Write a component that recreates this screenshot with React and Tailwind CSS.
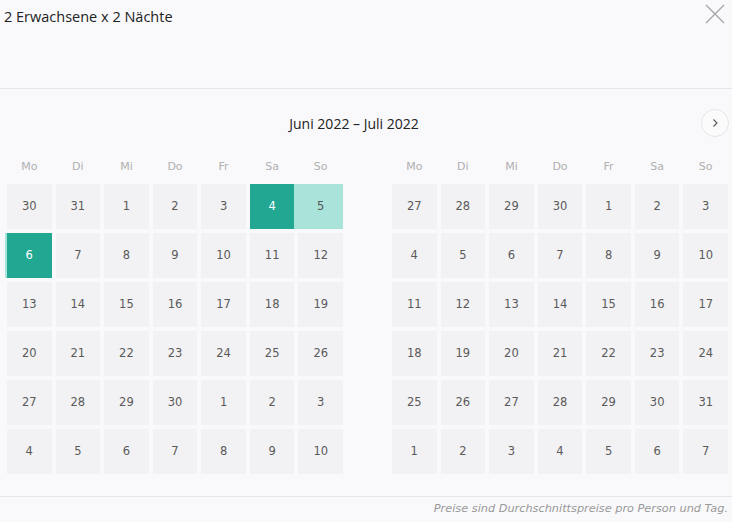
import React from "react";

const WEEKDAYS = ["Mo", "Di", "Mi", "Do", "Fr", "Sa", "So"];

const JUNE = [
  30, 31, 1, 2, 3, 4, 5,
  6, 7, 8, 9, 10, 11, 12,
  13, 14, 15, 16, 17, 18, 19,
  20, 21, 22, 23, 24, 25, 26,
  27, 28, 29, 30, 1, 2, 3,
  4, 5, 6, 7, 8, 9, 10,
];

const JULY = [
  27, 28, 29, 30, 1, 2, 3,
  4, 5, 6, 7, 8, 9, 10,
  11, 12, 13, 14, 15, 16, 17,
  18, 19, 20, 21, 22, 23, 24,
  25, 26, 27, 28, 29, 30, 31,
  1, 2, 3, 4, 5, 6, 7,
];

// index of cell in the grid -> selection style
const JUNE_SELECTION = {
  5: "start",
  6: "range",
  7: "end",
};

const Day = ({ value, state }) => {
  let cls = "bg-[#f2f2f4] text-[#5a5a5a]";
  if (state === "start") cls = "bg-[#22a792] text-white";
  if (state === "end") cls = "bg-[#22a792] text-white shadow-[-2px_0_0_#a9e3da]";
  if (state === "range") cls = "bg-[#a9e3da] text-[#555] shadow-[-4px_0_0_#a9e3da]";

  return (
    <div className={`h-[45px] flex items-center justify-center text-[11.5px] ${cls}`}>
      {value}
    </div>
  );
};

const Month = ({ days, selection = {} }) => (
  <div className="w-[336px]">
    <div className="grid grid-cols-7 gap-x-[4px] h-[20px]">
      {WEEKDAYS.map((d) => (
        <div key={d} className="flex items-center justify-center pt-[2px] text-[11px] text-[#b0b0b0]">
          {d}
        </div>
      ))}
    </div>
    <div className="grid grid-cols-7 gap-[4px] mt-[8px]">
      {days.map((n, i) => (
        <Day key={i} value={n} state={selection[i]} />
      ))}
    </div>
  </div>
);

export default function App() {
  return (
    <div
      className="w-[732px] h-[522px] bg-[#f9f9fb] flex flex-col overflow-hidden"
      style={{ fontFamily: "'DejaVu Sans', Verdana, sans-serif" }}
    >
      {/* header */}
      <div className="relative h-[89px] border-b border-[#e6e6ea] shrink-0">
        <div className="pl-[4px] pt-[6px] text-[14.5px] text-[#222] font-['Open_Sans',sans-serif]">
          2 Erwachsene x 2 Nächte
        </div>
        <button className="absolute right-[7px] top-[4px] w-[20px] h-[20px]" aria-label="Schließen">
          <svg viewBox="0 0 20 20" width="20" height="20" fill="none" stroke="#a3a3a3" strokeWidth="1.2">
            <path d="M1 1L19 19M19 1L1 19" />
          </svg>
        </button>
      </div>

      {/* calendar */}
      <div className="flex-1">
        <div className="flex items-center pl-[7px] pr-[3px] pt-[20px] h-[48px]">
          <div className="flex-1 text-center text-[14px] text-[#222] font-['Open_Sans',sans-serif]">
            Juni 2022 – Juli 2022
          </div>
          <button className="w-[28px] h-[28px] rounded-full border border-[#e6e6ea] bg-[#fbfbfc] flex items-center justify-center">
            <svg viewBox="0 0 10 10" width="10" height="10" fill="none" stroke="#555" strokeWidth="1.1">
              <path d="M3.5 1.5L7 5L3.5 8.5" />
            </svg>
          </button>
        </div>
        <div className="flex gap-[49px] pl-[7px] pr-[4px] mt-[19px]">
          <Month days={JUNE} selection={JUNE_SELECTION} />
          <Month days={JULY} />
        </div>
      </div>

      {/* footer */}
      <div className="h-[26px] border-t border-[#e6e6ea] flex items-center justify-end pr-[4px] shrink-0">
        <span className="italic text-[11.3px] text-[#9a9a9a]">
          Preise sind Durchschnittspreise pro Person und Tag.
        </span>
      </div>
    </div>
  );
}
